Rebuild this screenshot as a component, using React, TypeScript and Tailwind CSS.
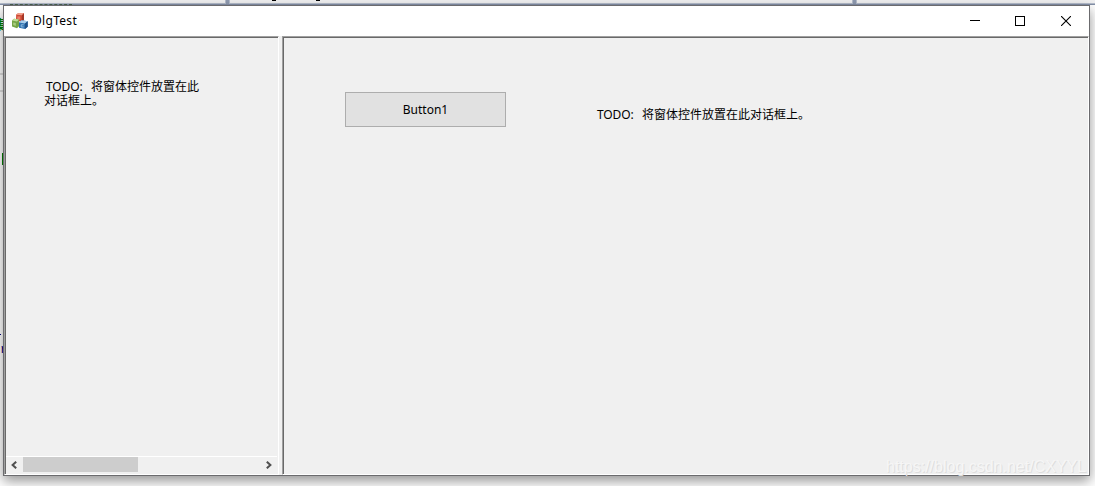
import type { ReactNode } from "react";

/** Slivers of the code editor that stay visible around the dialog. */
function EditorBackdrop() {
  return (
    <div className="absolute inset-0 overflow-hidden bg-white">
      <div className="h-[3px] bg-[#f0f0f1]" />
      <div className="h-px bg-[#b4bccb]" />
      <div className="h-px bg-[#8490a8]" />
      <span className="absolute left-[225px] top-0 h-1 w-[5px] border-x border-[#b4bccb] bg-[#8e9ab0]" />
      <span className="absolute left-[852px] top-0 h-1 w-[5px] border-x border-[#b4bccb] bg-[#8e9ab0]" />
      <span className="absolute left-[272px] top-0 h-px w-1 bg-black" />
      <span className="absolute left-[316px] top-0 h-px w-1 bg-black" />
      <span className="absolute left-[10px] top-[4px] w-[62px] border-t border-dashed border-[#48624f]" />
      <span className="absolute left-0 top-[73px] h-[2px] w-1 bg-[#dedede]" />
      <span className="absolute left-0 top-[90px] h-[2px] w-1 bg-[#dedede]" />
      <span className="absolute -left-[7px] top-[16px] font-['Noto_Sans_CJK_SC',sans-serif] text-[13px] font-bold leading-[16px] text-[#008000]">
        集
      </span>
      <span className="absolute left-[2px] top-[153px] h-3 w-2 border border-[#008000]" />
      <span className="absolute left-0 top-[334px] h-px w-px bg-[#000080]" />
      <span className="absolute left-0 top-[343px] font-['Liberation_Mono',monospace] text-[13px] leading-[14px] text-[#000080]">
        r
      </span>
    </div>
  );
}

function MfcIcon() {
  return (
    <svg width="16" height="16" viewBox="0 0 16 16">
      <path d="M4.2 1.6 6.4 0h5.4L12 .6v6.2L9.8 8.6 4 8Z" fill="#cf4a35" />
      <path d="M4.2 1.8 6.4 0h5.4L10 2.2Z" fill="#f0a08c" />
      <path d="M10 2.2 12 .8v6.4L9.8 8.6Z" fill="#a33828" />
      <path d="M5.3 3.4h3v3.2h-3Z" fill="#ea8069" />
      <path d="M0 7.6 2 5.8l5 .6v6.8L5 15.2 0 13.4Z" fill="#76a547" />
      <path d="m0 7.6 2-1.8 5 .6-2 2.2Z" fill="#bfdd97" />
      <path d="M1.2 9.4 3.8 10v3l-2.6-1Z" fill="#a9cc80" />
      <path d="m7 9.5 2.5-2.2 6.2 1v5.4L13 16l-6-1.2Z" fill="#2f72b0" />
      <path d="m7 9.5 2.5-2.2 6.2 1-2.7 2.3Z" fill="#a8cdea" />
      <path d="m13 10.6 2.7-2.3v5.4L13 16Z" fill="#1d5089" />
      <path d="M11.7 11.8H9.2v2.1h2.5" fill="none" stroke="#8fbbe0" />
    </svg>
  );
}

function TitleBar() {
  return (
    <header className="flex h-[30px] shrink-0 items-center bg-white pl-2">
      <MfcIcon />
      <h1 className="ml-[5px] flex-1 font-['Noto_Sans',sans-serif] text-[12px] leading-[16px] tracking-[0.3px] text-black">
        DlgTest
      </h1>
      <button aria-label="Minimize" className="flex w-[45px] justify-center">
        <svg width="10" height="10" shapeRendering="crispEdges">
          <path d="M0 4.5h10" stroke="#000" />
        </svg>
      </button>
      <button aria-label="Maximize" className="flex w-[46px] justify-center">
        <svg width="10" height="10" shapeRendering="crispEdges">
          <path d="M.5.5h9v9h-9Z" fill="none" stroke="#000" />
        </svg>
      </button>
      <button aria-label="Close" className="flex w-[46px] justify-center">
        <svg width="10" height="10">
          <path d="m0 0 10 10M10 0 0 10" stroke="#000" strokeWidth="1.1" />
        </svg>
      </button>
    </header>
  );
}

/** Sunken 3D edge: two dark lines top/left, a white line bottom/right. */
function Pane({ className, children }: { className: string; children: ReactNode }) {
  return (
    <section
      className={`flex border border-b-white border-l-[#a0a0a0] border-r-white border-t-[#a0a0a0] ${className}`}
    >
      <div className="flex min-w-0 flex-1 flex-col border-l border-t border-[#696969]">{children}</div>
    </section>
  );
}

function Label({ children }: { children: ReactNode }) {
  return (
    <p className="h-[14px] whitespace-nowrap font-['Noto_Sans_CJK_SC',sans-serif] text-[12px] leading-[14px] text-black">
      <span className="mr-[7px] inline-block w-[38px] font-['Noto_Sans',sans-serif] tracking-[-0.1px]">TODO:</span>
      {children}
    </p>
  );
}

function ScrollBar() {
  return (
    <div className="mr-px flex h-[18px] items-start border-t border-white">
      <span className="flex h-[15px] w-[17px] items-center pl-[5px]">
        <svg width="6" height="8">
          <path d="M5.2.7 1.6 4l3.6 3.3" fill="none" stroke="#505050" strokeWidth="2" />
        </svg>
      </span>
      <span className="h-[15px] w-[115px] bg-[#cdcdcd]" />
      <span className="ml-auto flex h-[15px] w-[17px] items-center justify-center">
        <svg width="6" height="8">
          <path d="M.8.7 4.4 4 .8 7.3" fill="none" stroke="#505050" strokeWidth="2" />
        </svg>
      </span>
    </div>
  );
}

export default function App() {
  return (
    <div className="relative h-[486px] w-[1095px] overflow-hidden">
      <EditorBackdrop />
      <div className="absolute left-[3px] top-[5px] flex h-[471px] w-[1087px] flex-col border border-[#6b6b6e] bg-[#f0f0f0] shadow-[0_5px_12px_0_rgba(0,0,0,0.42)]">
        <TitleBar />
        <main className="flex flex-1 gap-[3px]">
          <Pane className="w-[275px]">
            <div className="flex-1 pl-[38px] pt-[41px]">
              <div className="ml-[2px]">
                <Label>将窗体控件放置在此</Label>
              </div>
              <p className="font-['Noto_Sans_CJK_SC',sans-serif] text-[12px] leading-[14px] text-black">对话框上。</p>
            </div>
            <ScrollBar />
          </Pane>
          <Pane className="flex-1">
            <div className="flex flex-1 items-start pl-[61px] pt-[54px]">
              <button className="h-[35px] w-[161px] border border-[#adadad] bg-[#e1e1e1] font-['Noto_Sans',sans-serif] text-[12px] text-black">
                Button1
              </button>
              <div className="ml-[91px] mt-[15px]">
                <Label>将窗体控件放置在此对话框上。</Label>
              </div>
            </div>
          </Pane>
        </main>
      </div>
      <span className="absolute left-[886px] top-[458px] font-['Liberation_Sans',sans-serif] text-[16px] leading-[18px] text-[#f6f6f6] [text-shadow:1px_1px_0_#dedede]">
        https://blog.csdn.net/CXYYL
      </span>
    </div>
  );
}
